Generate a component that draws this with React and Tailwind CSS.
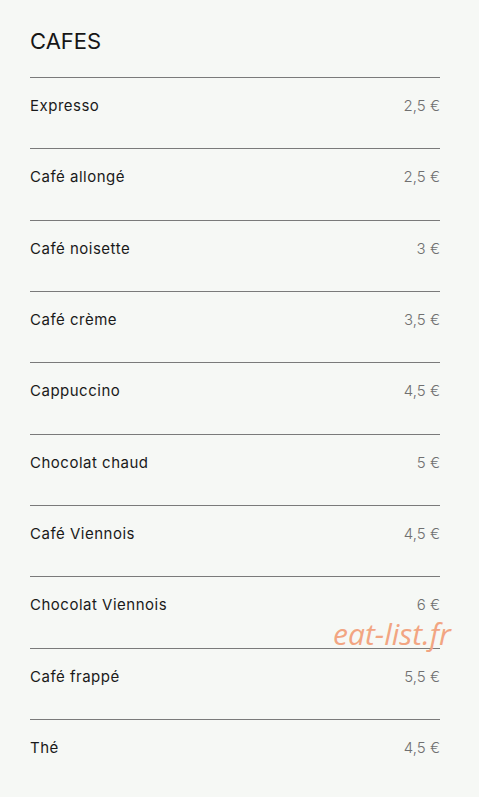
export default function App() {
  const items = [
    ["Expresso", "2,5 €"],
    ["Café allongé", "2,5 €"],
    ["Café noisette", "3 €"],
    ["Café crème", "3,5 €"],
    ["Cappuccino", "4,5 €"],
    ["Chocolat chaud", "5 €"],
    ["Café Viennois", "4,5 €"],
    ["Chocolat Viennois", "6 €"],
    ["Café frappé", "5,5 €"],
    ["Thé", "4,5 €"],
  ];
  return (
    <div className="relative min-h-[797px] w-full bg-[#f6f8f5] px-[30px] pt-[27px] pb-[20px]" style={{ fontFamily: "Inter, 'Liberation Sans', sans-serif" }}>
      <h2 className="text-[22px] leading-[28px] text-[#161616] font-normal mb-[22px]">CAFES</h2>
      <div className="w-[410px]">
        {items.map(([n, p]) => (
          <div key={n} className="border-t border-[#7a7a7a] h-[71.35px] pt-[18px] flex justify-between items-start">
            <span className="text-[15px] leading-[20px] text-[#1a1a1a] tracking-[0.5px]">{n}</span>
            <span className="text-[15px] leading-[20px] text-[#707070] font-light">{p}</span>
          </div>
        ))}
      </div>
      <div className="absolute left-[333px] top-[619px] text-[30px] italic text-[#f2a582] leading-none" style={{ fontFamily: "'Open Sans', sans-serif" }}>eat-list.fr</div>
    </div>
  );
}
